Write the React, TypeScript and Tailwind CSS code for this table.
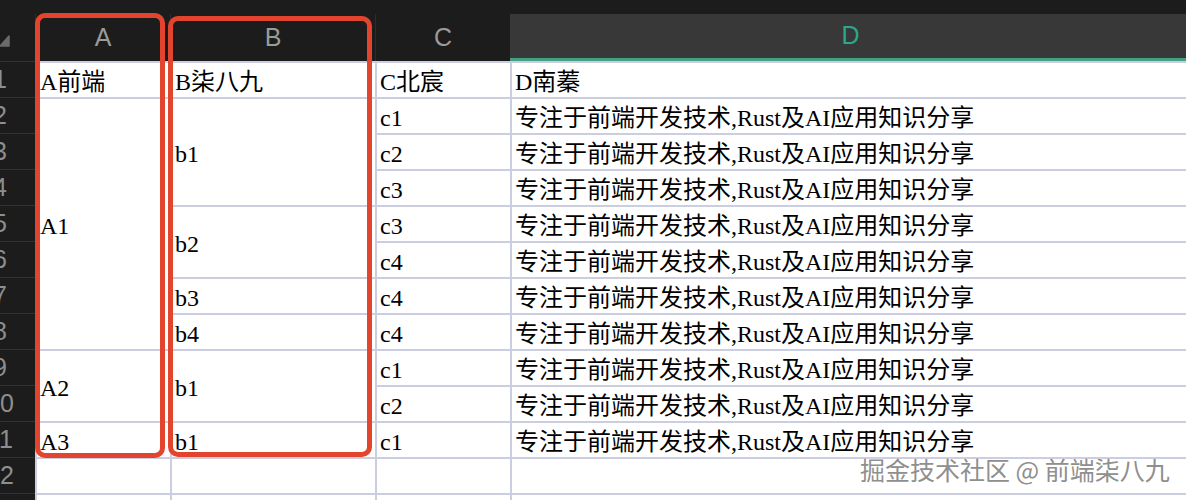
const cellFont = { fontFamily: '"Liberation Serif", "Noto Sans CJK SC", serif' };
const uiFont = { fontFamily: '"Liberation Sans", Arial, sans-serif' };

const text = "专注于前端开发技术,Rust及AI应用知识分享";

// merged cells in A and B: [col, rowStart, rowSpan, content]
const merged: [number, number, number, string][] = [
  [2, 1, 1, "A前端"],
  [3, 1, 1, "B柒八九"],
  [4, 1, 1, "C北宸"],
  [5, 1, 1, "D南蓁"],
  [2, 2, 7, "A1"],
  [2, 9, 2, "A2"],
  [2, 11, 1, "A3"],
  [3, 2, 3, "b1"],
  [3, 5, 2, "b2"],
  [3, 7, 1, "b3"],
  [3, 8, 1, "b4"],
  [3, 9, 2, "b1"],
  [3, 11, 1, "b1"],
];

const cCol = ["c1", "c2", "c3", "c3", "c4", "c4", "c4", "c1", "c2", "c1"];

const colStart: Record<number, string> = {
  2: "col-start-2",
  3: "col-start-3",
  4: "col-start-4",
  5: "col-start-5",
};
const rowStart: Record<number, string> = {
  1: "row-start-1",
  2: "row-start-2",
  3: "row-start-3",
  4: "row-start-4",
  5: "row-start-5",
  6: "row-start-6",
  7: "row-start-7",
  8: "row-start-8",
  9: "row-start-9",
  10: "row-start-10",
  11: "row-start-11",
  12: "row-start-12",
  13: "row-start-13",
};
const rowSpan: Record<number, string> = {
  1: "row-span-1",
  2: "row-span-2",
  3: "row-span-3",
  7: "row-span-7",
};

const Cell = ({ c, r, s, v }: { c: number; r: number; s: number; v: string }) => (
  <div
    className={`${colStart[c]} ${rowStart[r]} ${rowSpan[s]} flex items-center pl-[3px] pt-[3px] border-t-2 border-l-2 border-[#cbcde0] bg-white text-[24px] text-black whitespace-nowrap overflow-hidden`}
    style={cellFont}
  >
    {v}
  </div>
);

const App = () => {
  const all: [number, number, number, string][] = [...merged];
  cCol.forEach((v, i) => all.push([4, i + 2, 1, v]));
  for (let i = 2; i <= 11; i++) all.push([5, i, 1, text]);
  for (const r of [12, 13]) for (const c of [2, 3, 4, 5]) all.push([c, r, 1, ""]);

  return (
    <div className="relative w-[1186px] h-[500px] overflow-hidden bg-[#1c1c1c]">
      {/* top bar */}
      <div className="h-[14px]" />

      {/* column header */}
      <div className="grid grid-cols-[35px_135px_205px_135px_1fr] h-[47px]" style={uiFont}>
        <div className="relative overflow-hidden">
          <svg className="absolute left-0 top-[21px]" width="10" height="12" viewBox="0 0 10 12">
            <path d="M9 1 L9 11 L0 11 Z" fill="#6b6b6b" stroke="#6b6b6b" strokeLinejoin="round" strokeWidth="1.5" />
          </svg>
        </div>
        <div className="flex items-center justify-center border-l border-[#2c2c2c] text-[25px] text-[#9b9b9b]">A</div>
        <div className="flex items-center justify-center border-l border-[#2c2c2c] text-[25px] text-[#9b9b9b]">B</div>
        <div className="flex items-center justify-center border-l border-[#2c2c2c] text-[25px] text-[#9b9b9b]">C</div>
        <div className="flex items-center justify-center bg-[#383838] border-b-[3px] border-[#45a083] text-[25px] text-[#2ba88b]">
          <span className="ml-[5px]">D</span>
        </div>
      </div>

      {/* body */}
      <div className="grid grid-cols-[35px_135px_205px_135px_1fr] grid-rows-[repeat(13,36px)]">
        {Array.from({ length: 13 }, (_, i) => (
          <div
            key={i}
            className={`col-start-1 ${rowStart[i + 1]} overflow-hidden border-t border-[#333333] bg-[#1c1c1c]`}
            style={uiFont}
          >
            <div className="w-[70px] -ml-[35px] h-full flex items-center justify-center text-[25px] text-[#8e8e8e]">
              {i + 1}
            </div>
          </div>
        ))}
        {all.map(([c, r, s, v], i) => (
          <Cell key={i} c={c} r={r} s={s} v={v} />
        ))}
      </div>

      {/* annotation boxes */}
      <div className="absolute left-[35px] top-[13px] w-[130px] h-[445px] border-[5px] border-[#e3442d] rounded-[10px]" />
      <div className="absolute left-[168px] top-[16px] w-[204px] h-[441px] border-[5px] border-[#e3442d] rounded-[10px]" />

      {/* watermark */}
      <div
        className="absolute left-[860px] top-[451px] text-[25px] text-[#8f8f8f] whitespace-nowrap [text-shadow:0_0_2px_#ffffff,0_1px_1px_#ffffff]"
        style={{ fontFamily: '"Noto Sans CJK SC", sans-serif' }}
      >
        掘金技术社区 @ 前端柒八九
      </div>
    </div>
  );
};

export default App;
